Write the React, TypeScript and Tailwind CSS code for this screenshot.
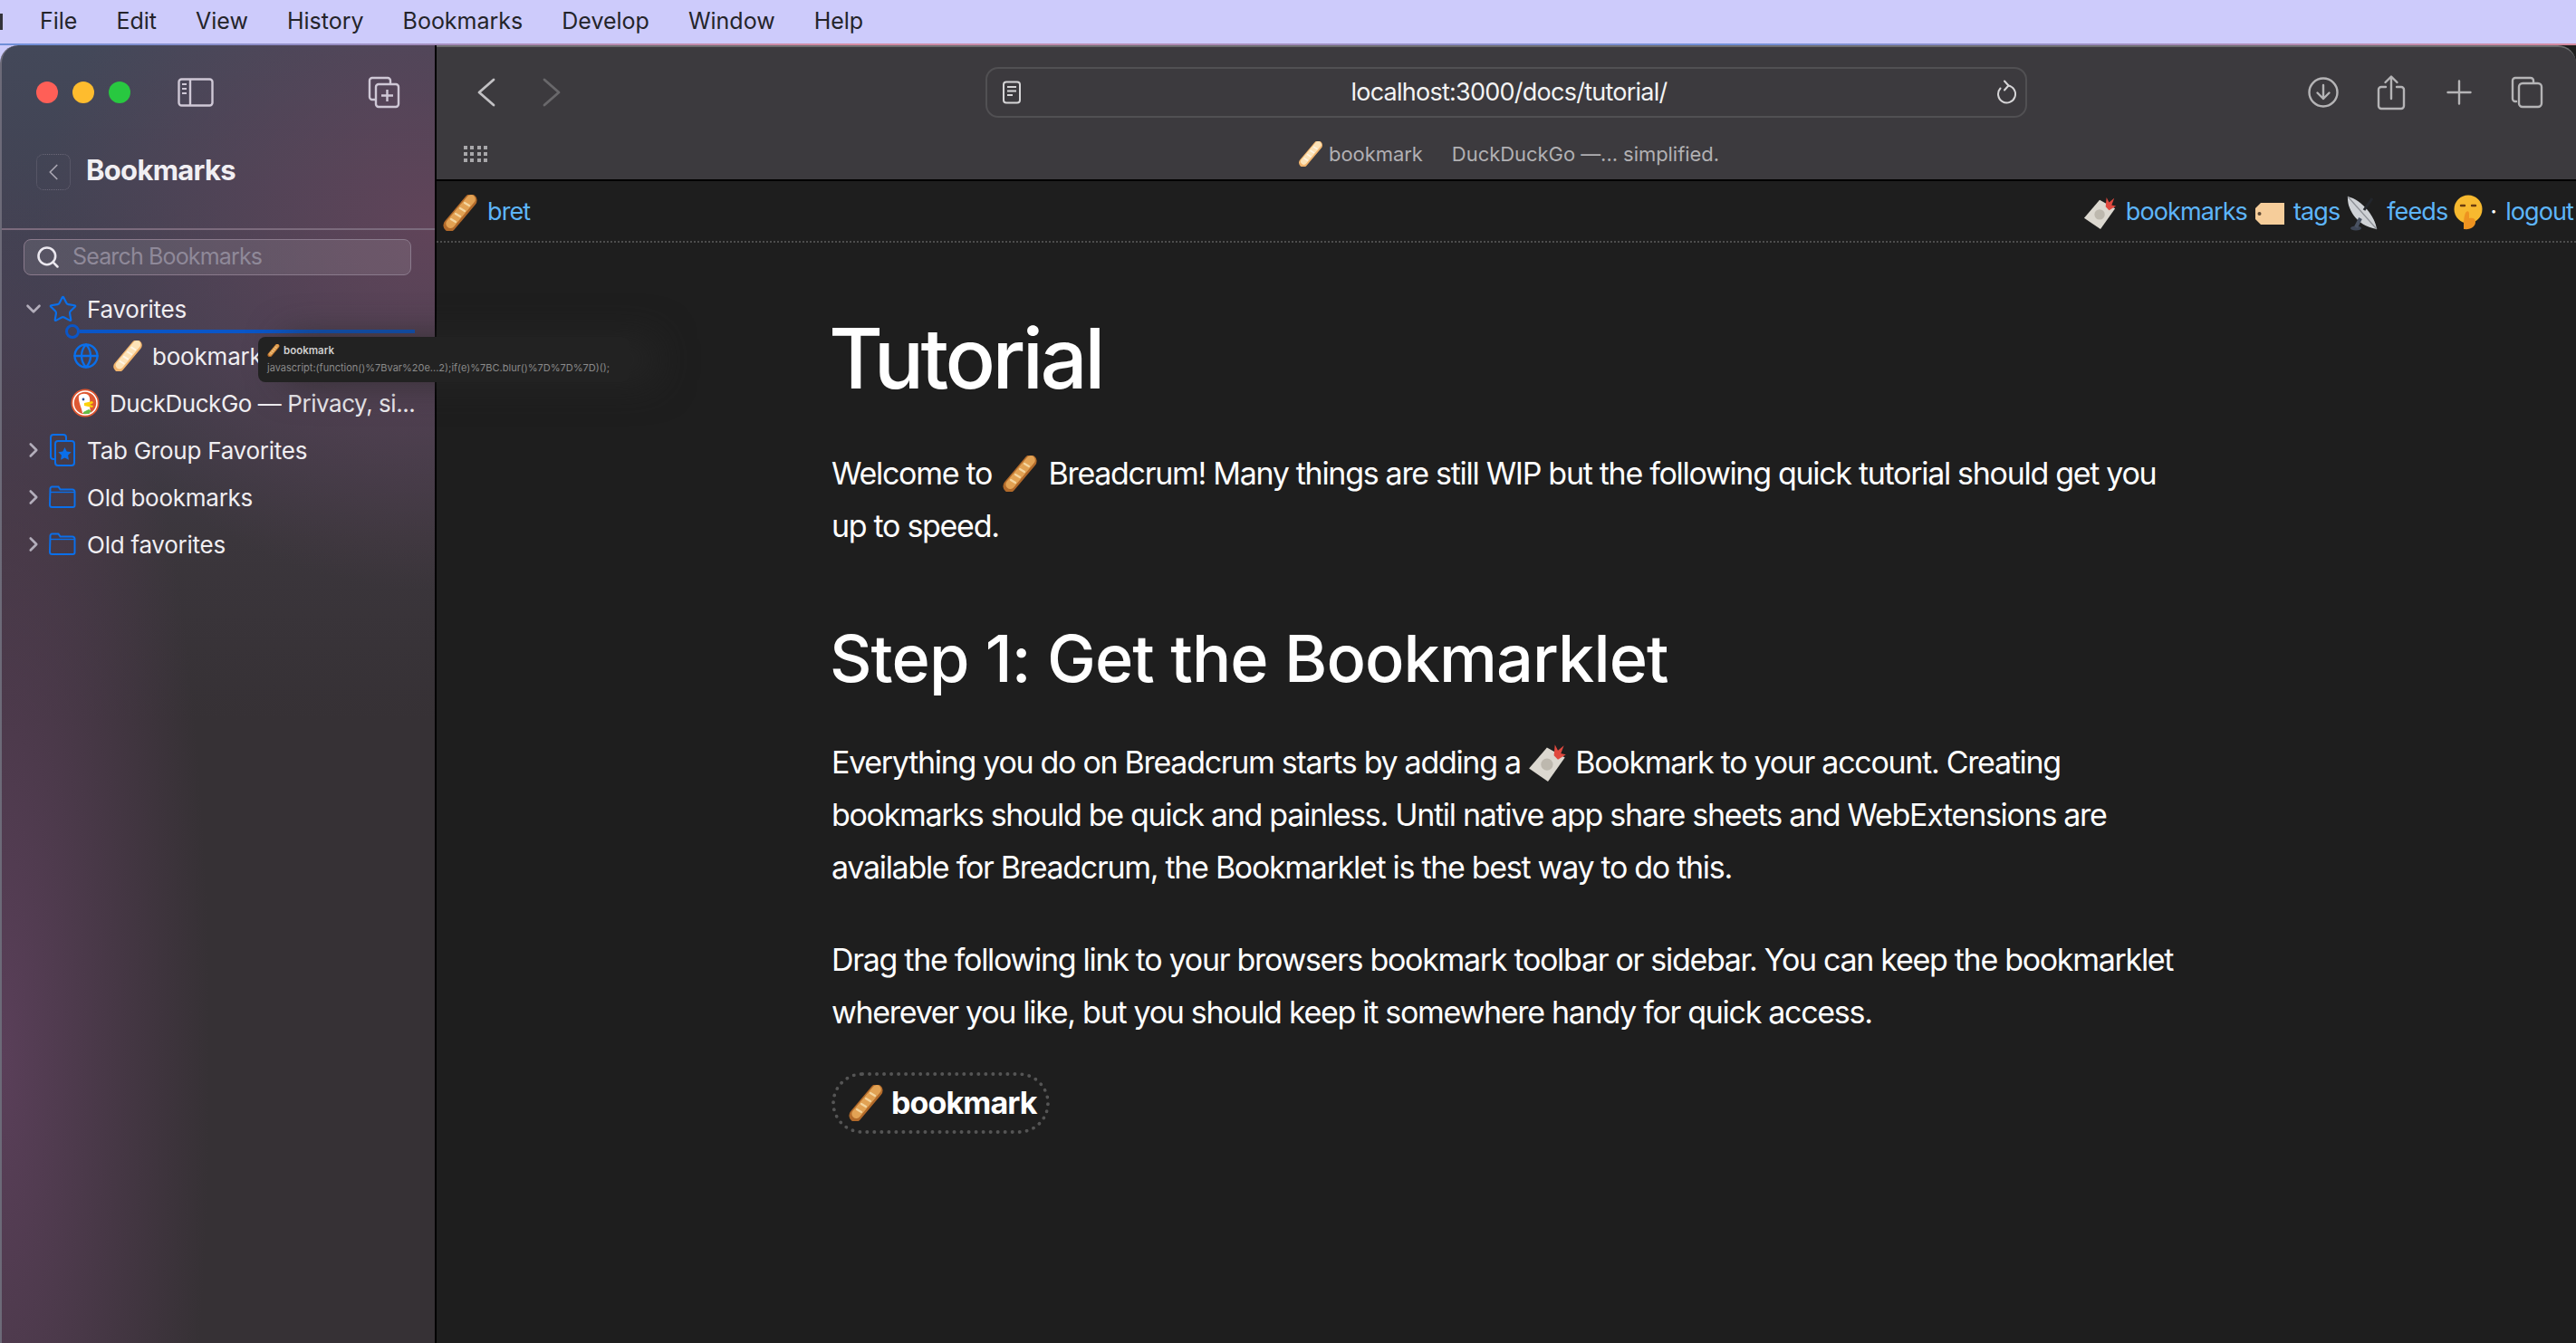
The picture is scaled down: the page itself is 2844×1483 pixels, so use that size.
import React from 'react';
import { ChevronDown, ChevronRight, ChevronLeft, Search, Star, Globe } from 'lucide-react';

function Baguette({ size = 40, pale = false, className = '' }: { size?: number; pale?: boolean; className?: string }) {
  return (
    <svg width={size} height={size} viewBox="0 0 40 40" className={'inline-block shrink-0 ' + className}>
      <rect x="13" y="-5" width="14" height="50" rx="7" transform="rotate(40 20 20)" fill={pale ? '#f2b56e' : '#b26a2a'} />
      <rect x="14.500" y="-4" width="10" height="45" rx="5" transform="rotate(40 20 20)" fill={pale ? '#fde3b8' : '#e2a254'} />
      <path d="M10 27l5 3M15 21l5 3M20 15l5 3M25 9l5 3" stroke={pale ? '#fff6e6' : '#f4d6a0'} strokeWidth="2.200" strokeLinecap="round" />
    </svg>
  );
}

function BookmarkCard({ size = 38, className = '' }: { size?: number; className?: string }) {
  return (
    <svg width={size} height={size} viewBox="0 0 40 40" className={'inline-block shrink-0 ' + className}>
      <path d="M19 5L37 15 20 39 1 26z" fill="#dcd8d0" />
      <circle cx="19" cy="22" r="6" fill="#bdb8ae" />
      <path d="M26 13l1-11 3 6 6-5-3 8 5 1-8 5z" fill="#e0493f" />
    </svg>
  );
}

function TagLabel() {
  return (
    <svg width="33" height="26" viewBox="0 0 33 26" className="inline-block shrink-0">
      <path d="M7 1h26v24H7L1 19V7z" fill="#f6cd9a" />
      <circle cx="5.500" cy="13" r="2" fill="#5b4632" />
    </svg>
  );
}

function Satellite() {
  return (
    <svg width="34" height="40" viewBox="0 0 34 40" className="inline-block shrink-0">
      <path d="M1 2C0 14 9 34 33 38 31 24 17 6 1 2z" fill="#cfd2d6" />
      <path d="M1 2l32 36" stroke="#8d9096" strokeWidth="1.200" />
      <path d="M19 17l9-13" stroke="#23262c" strokeWidth="3" />
      <ellipse cx="10" cy="37" rx="6" ry="2.600" fill="#3e4656" />
      <path d="M10 36l5-10" stroke="#4a5262" strokeWidth="4" />
    </svg>
  );
}

function ShushFace() {
  return (
    <svg width="32" height="40" viewBox="0 0 32 40" className="inline-block shrink-0">
      <circle cx="16" cy="16" r="15.500" fill="#f7b92f" />
      <path d="M8 12h4M20 12h4" stroke="#6b3d10" strokeWidth="2.400" strokeLinecap="round" />
      <path d="M11 38c0-8 0-13 2-18 2-3 4-2 4 1v5c4-1 7 0 7 4 0 5-5 9-13 8z" fill="#ee9320" />
    </svg>
  );
}

function DuckLogo() {
  return (
    <svg width="32" height="32" viewBox="0 0 32 32" className="shrink-0">
      <circle cx="16" cy="16" r="15.500" fill="#de5833" />
      <circle cx="16" cy="16" r="13" fill="none" stroke="#fff" strokeWidth="1.500" />
      <path d="M9 8c3-3 9-3 11 0 2 3 1 8 1 11l1 8h-9c-1-6-5-13-4-19z" fill="#fff" />
      <path d="M15 16l9-2 1 2-4 2 4 1-1 2-9-2z" fill="#fdd20a" />
      <path d="M14 26l6-3 3 2-3 3h-6z" fill="#65bc46" />
      <circle cx="14" cy="12" r="1.400" fill="#2d4f8e" />
    </svg>
  );
}

function FolderIcon() {
  return (
    <svg width="30" height="26" viewBox="0 0 30 26" fill="none" stroke="#0a6fea" strokeWidth="2" className="shrink-0">
      <path d="M1.500 3.500a2 2 0 0 1 2-2h7l2 3h13.500a2.500 2.500 0 0 1 2.500 2.500v15a2 2 0 0 1-2 2h-23a2.500 2.500 0 0 1-2.500-2.500z" />
      <path d="M1.500 7.500h27" strokeWidth="1.400" />
    </svg>
  );
}

function TabGroupStar() {
  return (
    <svg width="28" height="36" viewBox="0 0 28 36" fill="none" stroke="#0a6fea" strokeWidth="2" className="shrink-0">
      <path d="M5 28H4a3 3 0 0 1-3-3V4a3 3 0 0 1 3-3h11a3 3 0 0 1 3 3v3" />
      <rect x="6" y="8" width="21" height="27" rx="3" />
      <path d="M16.500 15l2.200 4.600 5 .7-3.600 3.500.9 5-4.500-2.400-4.500 2.400.9-5-3.600-3.500 5-.7z" fill="#0a6fea" stroke="none" />
    </svg>
  );
}

function ToolIcon({ children, w = 40, h = 40 }: { children: React.ReactNode; w?: number; h?: number }) {
  return (
    <svg width={w} height={h} viewBox={`0 0 ${w} ${h}`} fill="none" stroke="#b5b4b6" strokeWidth="2.400" strokeLinecap="round" strokeLinejoin="round" className="shrink-0">
      {children}
    </svg>
  );
}

function TreeRow({ open, icon, label }: { open?: boolean; icon: React.ReactNode; label: string }) {
  return (
    <div className="h-[52px] flex items-center pl-[22px]">
      {open ? (
        <ChevronDown size={26} strokeWidth={2.400} className="text-[#b3aebb] shrink-0" />
      ) : (
        <ChevronRight size={26} strokeWidth={2.400} className="text-[#b3aebb] shrink-0" />
      )}
      <div className="w-[46px] flex justify-center shrink-0 pr-[8px]">{icon}</div>
      <span className="text-[26px] tracking-[-0.25px] text-[#f0eef2] whitespace-nowrap">{label}</span>
    </div>
  );
}

function Sidebar() {
  return (
    <aside className="relative w-[480px] shrink-0 border-l-2 border-[#6c6a78] rounded-tl-[20px] bg-[radial-gradient(ellipse_230px_1000px_at_0%_78%,#5a3f59_0%,#5a3f5900_100%),radial-gradient(ellipse_440px_400px_at_100%_14%,#604459_0%,#60445900_100%),linear-gradient(180deg,#434859_0%,#413f4f_22%,#3b363c_38%,#363135_52%,#363135_100%)]">
      <div className="h-[104px] flex items-center pl-[38px] pr-[38px]">
        <div className="flex gap-4">
          <div className="w-6 h-6 rounded-full bg-[#ff5f57]" />
          <div className="w-6 h-6 rounded-full bg-[#febc2e]" />
          <div className="w-6 h-6 rounded-full bg-[#28c840]" />
        </div>
        <svg width="40" height="32" viewBox="0 0 40 32" fill="none" stroke="#cfc8d6" strokeWidth="2.400" className="ml-[52px]">
          <rect x="1.500" y="1.500" width="37" height="29" rx="3" />
          <path d="M14 1.500v29" />
          <path d="M5 7h5M5 12h5M5 17h5" strokeWidth="1.800" />
        </svg>
        <svg width="36" height="36" viewBox="0 0 36 36" fill="none" stroke="#cfc8d6" strokeWidth="2.400" className="ml-auto">
          <path d="M8 26H5a3 3 0 0 1-3-3V5a3 3 0 0 1 3-3h17a3 3 0 0 1 3 3v3" />
          <rect x="9" y="9" width="25" height="25" rx="3" />
          <path d="M21.500 15v13M15 21.500h13" />
        </svg>
      </div>
      <div className="h-[100px] pl-[38px] pt-[11px] border-b-2 border-[#7b6a7c]">
        <div className="flex items-center">
          <div className="w-[38px] h-[40px] flex items-center justify-center border border-dotted border-[#6b6878] rounded-lg">
            <ChevronLeft size={30} strokeWidth={1.400} className="text-[#a9a6b2]" />
          </div>
          <span className="ml-[17px] mb-[3px] text-[31px] font-bold text-[#f1eff3] tracking-[-0.7px]">Bookmarks</span>
        </div>
      </div>
      <div className="pl-[24px] pr-[26px] pt-[10px]">
        <div className="h-[40px] flex items-center pl-[12px] rounded-lg bg-white/10 border border-[#8a7a8c]">
          <Search size={28} strokeWidth={2.200} className="text-[#ebe8ef]" />
          <span className="ml-[13px] text-[25px] tracking-[-0.85px] text-[#8f8999]">Search Bookmarks</span>
        </div>
      </div>
      <div className="pt-[11px]">
        <TreeRow open icon={<Star size={33} strokeWidth={1.600} className="text-[#0a6fea]" />} label="Favorites" />
        <div className="h-[52px] flex items-center pl-[78px]">
          <Globe size={30} strokeWidth={1.900} className="text-[#0a6fea] shrink-0" />
          <Baguette size={34} pale className="ml-[14px]" />
          <span className="ml-[10px] text-[26px] tracking-[-0.2px] text-[#f0eef2]">bookmark</span>
        </div>
        <div className="h-[52px] flex items-center pl-[76px]">
          <DuckLogo />
          <span className="ml-[11px] text-[26px] tracking-[-0.45px] text-[#f0eef2] whitespace-nowrap">DuckDuckGo — Privacy, si...</span>
        </div>
        <TreeRow icon={<TabGroupStar />} label="Tab Group Favorites" />
        <TreeRow icon={<FolderIcon />} label="Old bookmarks" />
        <TreeRow icon={<FolderIcon />} label="Old favorites" />
      </div>
      {/* drag insertion marker */}
      <div className="absolute left-[70px] top-[308px] w-[386px] flex items-center">
        <div className="w-4 h-4 rounded-full border-[3px] border-[#0a56c8] shrink-0" />
        <div className="h-[4px] flex-1 bg-[#0a56c8]" />
      </div>
      {/* drag preview tooltip */}
      <div className="absolute z-10 left-[283px] top-[322px] w-[410px] h-[50px] rounded-lg bg-[#222222] pl-[10px] pt-[6px] shadow-[30px_0_40px_rgba(40,40,40,0.7)]">
        <div className="flex items-center leading-[18px]">
          <Baguette size={14} />
          <span className="ml-[4px] text-[11.500px] font-semibold text-[#cfcfcf]">bookmark</span>
        </div>
        <div className="mt-[1px] text-[11px] leading-[18px] text-[#8a8a8a] whitespace-nowrap">javascript:(function()%7Bvar%20e...2);if(e)%7BC.blur()%7D%7D%7D)();</div>
      </div>
    </aside>
  );
}

function Toolbar() {
  return (
    <div className="h-[150px] bg-[#3c3a3e] border-t-2 border-[#6d6d6f] border-b-2 border-b-black rounded-tr-[20px]">
      <div className="h-[100px] flex items-center">
        <div className="w-[606px] flex items-center shrink-0 pl-[43px]">
          <svg width="24" height="34" viewBox="0 0 24 34" fill="none" stroke="#c2c1c4" strokeWidth="2.800" strokeLinecap="round" strokeLinejoin="round">
            <path d="M20 3L4 17l16 14" />
          </svg>
          <svg width="24" height="34" viewBox="0 0 24 34" fill="none" stroke="#69686b" strokeWidth="2.800" strokeLinecap="round" strokeLinejoin="round" className="ml-[48px]">
            <path d="M4 3l16 14L4 31" />
          </svg>
        </div>
        <div className="w-[1150px] h-[56px] flex items-center pl-[16px] pr-[10px] border-2 border-[#515053] rounded-[14px] shrink-0">
          <svg width="22" height="26" viewBox="0 0 22 26" fill="none" stroke="#d6d5d7" strokeWidth="2" className="shrink-0">
            <rect x="2" y="1.500" width="18" height="23" rx="3" />
            <path d="M6 7h10M6 11.500h10M6 16h6" />
          </svg>
          <span className="flex-1 text-center text-[27px] tracking-[-0.75px] text-[#f3f3f3]">localhost:3000/docs/tutorial/</span>
          <svg width="22" height="28" viewBox="0 0 22 28" fill="none" stroke="#d6d5d7" strokeWidth="2" strokeLinecap="round" strokeLinejoin="round" className="shrink-0">
            <path d="M13 6.500A9.500 9.500 0 1 1 4.500 9.500" />
            <path d="M9 1.500l4.500 5-4.500 5" />
          </svg>
        </div>
        <div className="flex items-center ml-[289px]">
          <div className="w-[75px] flex justify-center">
            <ToolIcon w={36} h={36}>
              <circle cx="18" cy="18" r="15.500" />
              <path d="M18 10v15M11.500 18.500l6.500 6.500 6.500-6.500" />
            </ToolIcon>
          </div>
          <div className="w-[75px] flex justify-center">
            <ToolIcon w={32} h={40}>
              <path d="M10 14H5a3 3 0 0 0-3 3v18a3 3 0 0 0 3 3h22a3 3 0 0 0 3-3V17a3 3 0 0 0-3-3h-5" />
              <path d="M16 27V3M9.500 9L16 2.500 22.500 9" />
            </ToolIcon>
          </div>
          <div className="w-[75px] flex justify-center">
            <ToolIcon w={30} h={30}>
              <path d="M15 2.500v25M2.500 15h25" />
            </ToolIcon>
          </div>
          <div className="w-[75px] flex justify-center">
            <ToolIcon w={36} h={36}>
              <path d="M6 28H5a3 3 0 0 1-3-3V5a3 3 0 0 1 3-3h17a3 3 0 0 1 3 3v2" />
              <rect x="9" y="8" width="25" height="26" rx="4" />
            </ToolIcon>
          </div>
        </div>
      </div>
      <div className="h-[38px] pb-[2px] flex items-center">
        <div className="w-[951px] shrink-0 pl-[30px]">
          <div className="grid grid-cols-4 gap-[3px] w-[26px]">
            {Array.from({ length: 12 }).map((_, i) => (
              <div key={i} className="w-[4px] h-[4px] bg-[#a8a7aa]" />
            ))}
          </div>
        </div>
        <Baguette size={28} pale />
        <span className="ml-[6px] text-[22px] tracking-[-0.05px] text-[#b1b0b3]">bookmark</span>
        <span className="ml-[32px] text-[22px] tracking-[-0.05px] text-[#b1b0b3]">DuckDuckGo —... simplified.</span>
      </div>
    </div>
  );
}

function TopNav() {
  return (
    <nav className="h-[68px] pt-[3px] flex items-center justify-between pl-[6px] pr-[3px] border-b-2 border-dotted border-[#4d4d4d] text-[27px] tracking-[-0.9px] text-[#5db5fa]">
      <div className="flex items-center gap-[10px]">
        <Baguette size={40} />
        <span>bret</span>
      </div>
      <div className="flex items-center">
        <BookmarkCard />
        <span className="ml-[9px]">bookmarks</span>
        <span className="ml-[8px]"><TagLabel /></span>
        <span className="ml-[10px]">tags</span>
        <span className="ml-[8px]"><Satellite /></span>
        <span className="ml-[10px]">feeds</span>
        <span className="ml-[7px]"><ShushFace /></span>
        <span className="ml-[8px] text-white">·</span>
        <span className="ml-[10px]">logout</span>
      </div>
    </nav>
  );
}

function Article() {
  return (
    <article className="pl-[436px] w-[1924px] text-white text-[34px] leading-[58px] tracking-[-1.3px]">
      <h1 className="mt-[73px] -ml-[3px] text-[92px] leading-[110px] font-medium tracking-[-3.5px]">Tutorial</h1>
      <p className="mt-[43px]">
        Welcome to <Baguette className="align-[-8px] mx-[3px]" /> Breadcrum! Many things are still WIP but the following quick tutorial should get you up to speed.
      </p>
      <h2 className="mt-[72px] -ml-[2px] text-[72px] leading-[90px] font-medium tracking-[-0.9px]">Step 1: Get the Bookmarklet</h2>
      <p className="mt-[41px]">
        Everything you do on Breadcrum starts by adding a <BookmarkCard size={44} className="align-[-10px]" /> Bookmark to your account. Creating bookmarks should be quick and painless. Until native app share sheets and WebExtensions are available for Breadcrum, the Bookmarklet is the best way to do this.
      </p>
      <p className="mt-[44px]">
        Drag the following link to your browsers bookmark toolbar or sidebar. You can keep the bookmarklet wherever you like, but you should keep it somewhere handy for quick access.
      </p>
      <a className="mt-[37px] inline-flex items-center h-[68px] pl-[14px] pr-[10px] border-[4px] border-dotted border-[#555555] rounded-[34px] font-bold tracking-[-0.9px]">
        <Baguette size={40} />
        <span className="ml-[8px]">bookmark</span>
      </a>
    </article>
  );
}

export default function App() {
  return (
    <div className="w-[2844px] h-[1483px] overflow-hidden bg-[#cdcbfb] font-['Inter',sans-serif]">
      <div className="h-[48px] flex items-center bg-[#cdcbfb] text-[25px] text-[#24242a]">
        <div className="w-[3px] h-[18px] bg-[#33333a] shrink-0" />
        <div className="flex gap-[43px] pl-[41px]">
          <span>File</span>
          <span>Edit</span>
          <span>View</span>
          <span>History</span>
          <span>Bookmarks</span>
          <span>Develop</span>
          <span>Window</span>
          <span>Help</span>
        </div>
      </div>
      <div className="h-[2px] bg-[linear-gradient(90deg,#6f8fd8,#d58aa0,#6f8fd8,#d58aa0)]" />
      <div className="flex h-[1433px]">
        <Sidebar />
        <main className="flex-1 min-w-0 bg-[#1e1e1e] border-l-2 border-black">
          <Toolbar />
          <TopNav />
          <Article />
        </main>
      </div>
    </div>
  );
}
